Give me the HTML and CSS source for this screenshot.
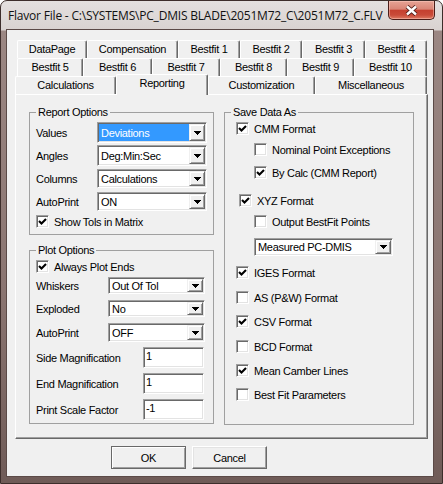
FILE: index.html
```html
<!DOCTYPE html>
<html>
<head>
<meta charset="utf-8">
<title>Flavor File</title>
<link rel="stylesheet" href="styles.css">
</head>
<body>
<div class="window">
  <div class="titlebar">
    <span class="title">Flavor File - C:\SYSTEMS\PC_DMIS BLADE\2051M72_C\2051M72_C.FLV</span>
    <div class="close">
      <svg width="13" height="11" viewBox="0 0 13 11"><path d="M2 1.5 L11 9.5 M11 1.5 L2 9.5" stroke="#4a1a14" stroke-width="4.2" fill="none"/><path d="M2 1.5 L11 9.5 M11 1.5 L2 9.5" stroke="#fff" stroke-width="2.4" fill="none"/></svg>
    </div>
  </div>
  <div class="client">
    <div class="tabctl">
      <div class="tabrow r1">
        <div class="tab">DataPage</div>
        <div class="tab">Compensation</div>
        <div class="tab">Bestfit 1</div>
        <div class="tab">Bestfit 2</div>
        <div class="tab">Bestfit 3</div>
        <div class="tab">Bestfit 4</div>
      </div>
      <div class="tabrow r2">
        <div class="tab">Bestfit 5</div>
        <div class="tab">Bestfit 6</div>
        <div class="tab">Bestfit 7</div>
        <div class="tab">Bestfit 8</div>
        <div class="tab">Bestfit 9</div>
        <div class="tab">Bestfit 10</div>
      </div>
      <div class="tabrow r3">
        <div class="tab">Calculations</div>
        <div class="tab active">Reporting</div>
        <div class="tab">Customization</div>
        <div class="tab">Miscellaneous</div>
      </div>
      <div class="panel">
        <div class="col">
          <fieldset class="group g-report">
            <legend>Report Options</legend>
            <div class="field mt3"><span class="lbl lbl-r">Values</span><div class="combo w110 h21"><span class="cval sel">Deviations</span><span class="cbtn"><svg width="7" height="4" viewBox="0 0 7 4"><path d="M0 0H7V1H6V2H5V3H4V4H3V3H2V2H1V1H0Z"/></svg></span></div></div>
            <div class="field mt2"><span class="lbl lbl-r">Angles</span><div class="combo w110 h21"><span class="cval">Deg:Min:Sec</span><span class="cbtn"><svg width="7" height="4" viewBox="0 0 7 4"><path d="M0 0H7V1H6V2H5V3H4V4H3V3H2V2H1V1H0Z"/></svg></span></div></div>
            <div class="field mt3"><span class="lbl lbl-r">Columns</span><div class="combo w110 h19"><span class="cval">Calculations</span><span class="cbtn"><svg width="7" height="4" viewBox="0 0 7 4"><path d="M0 0H7V1H6V2H5V3H4V4H3V3H2V2H1V1H0Z"/></svg></span></div></div>
            <div class="field mt4"><span class="lbl lbl-r">AutoPrint</span><div class="combo w110 h19"><span class="cval">ON</span><span class="cbtn"><svg width="7" height="4" viewBox="0 0 7 4"><path d="M0 0H7V1H6V2H5V3H4V4H3V3H2V2H1V1H0Z"/></svg></span></div></div>
            <div class="check mt4"><span class="box"><svg class="tick" width="11" height="11" viewBox="0 0 11 11"><polyline points="2,5 4.5,7.5 9,3" fill="none" stroke="#000" stroke-width="2.1"/></svg></span><span>Show Tols in Matrix</span></div>
          </fieldset>
          <fieldset class="group g-plot">
            <legend>Plot Options</legend>
            <div class="check mt3"><span class="box"><svg class="tick" width="11" height="11" viewBox="0 0 11 11"><polyline points="2,5 4.5,7.5 9,3" fill="none" stroke="#000" stroke-width="2.1"/></svg></span><span>Always Plot Ends</span></div>
            <div class="field mt4"><span class="lbl lbl-p">Whiskers</span><div class="combo w97 h17"><span class="cval">Out Of Tol</span><span class="cbtn"><svg width="7" height="4" viewBox="0 0 7 4"><path d="M0 0H7V1H6V2H5V3H4V4H3V3H2V2H1V1H0Z"/></svg></span></div></div>
            <div class="field mt6"><span class="lbl lbl-p">Exploded</span><div class="combo w97 h17"><span class="cval">No</span><span class="cbtn"><svg width="7" height="4" viewBox="0 0 7 4"><path d="M0 0H7V1H6V2H5V3H4V4H3V3H2V2H1V1H0Z"/></svg></span></div></div>
            <div class="field mt6"><span class="lbl lbl-p">AutoPrint</span><div class="combo w97 h19"><span class="cval">OFF</span><span class="cbtn"><svg width="7" height="4" viewBox="0 0 7 4"><path d="M0 0H7V1H6V2H5V3H4V4H3V3H2V2H1V1H0Z"/></svg></span></div></div>
            <div class="field mt5"><span class="lbl lbl-t">Side Magnification</span><div class="text">1</div></div>
            <div class="field mt5"><span class="lbl lbl-t">End Magnification</span><div class="text">1</div></div>
            <div class="field mt5"><span class="lbl lbl-t">Print Scale Factor</span><div class="text">-1</div></div>
          </fieldset>
        </div>
        <div class="col">
          <fieldset class="group g-save">
            <legend>Save Data As</legend>
            <div class="check mt3 ind5"><span class="box"><svg class="tick" width="11" height="11" viewBox="0 0 11 11"><polyline points="2,5 4.5,7.5 9,3" fill="none" stroke="#000" stroke-width="2.1"/></svg></span><span>CMM Format</span></div>
            <div class="check mt8 ind23"><span class="box"></span><span>Nominal Point Exceptions</span></div>
            <div class="check mt10 ind23"><span class="box"><svg class="tick" width="11" height="11" viewBox="0 0 11 11"><polyline points="2,5 4.5,7.5 9,3" fill="none" stroke="#000" stroke-width="2.1"/></svg></span><span>By Calc (CMM Report)</span></div>
            <div class="check mt15 ind8"><span class="box"><svg class="tick" width="11" height="11" viewBox="0 0 11 11"><polyline points="2,5 4.5,7.5 9,3" fill="none" stroke="#000" stroke-width="2.1"/></svg></span><span>XYZ Format</span></div>
            <div class="check mt8 ind23"><span class="box"></span><span>Output BestFit Points</span></div>
            <div class="combo w139 h18 mt10 ind23"><span class="cval">Measured PC-DMIS</span><span class="cbtn"><svg width="7" height="4" viewBox="0 0 7 4"><path d="M0 0H7V1H6V2H5V3H4V4H3V3H2V2H1V1H0Z"/></svg></span></div>
            <div class="check mt10 ind5"><span class="box"><svg class="tick" width="11" height="11" viewBox="0 0 11 11"><polyline points="2,5 4.5,7.5 9,3" fill="none" stroke="#000" stroke-width="2.1"/></svg></span><span>IGES Format</span></div>
            <div class="check mt12 ind5"><span class="box"></span><span>AS (P&amp;W) Format</span></div>
            <div class="check mt11 ind5"><span class="box"><svg class="tick" width="11" height="11" viewBox="0 0 11 11"><polyline points="2,5 4.5,7.5 9,3" fill="none" stroke="#000" stroke-width="2.1"/></svg></span><span>CSV Format</span></div>
            <div class="check mt12 ind5"><span class="box"></span><span>BCD Format</span></div>
            <div class="check mt11 ind5"><span class="box"><svg class="tick" width="11" height="11" viewBox="0 0 11 11"><polyline points="2,5 4.5,7.5 9,3" fill="none" stroke="#000" stroke-width="2.1"/></svg></span><span>Mean Camber Lines</span></div>
            <div class="check mt11 ind5"><span class="box"></span><span>Best Fit Parameters</span></div>
          </fieldset>
        </div>
      </div>
    </div>
    <div class="buttons">
      <div class="btn default">OK</div>
      <div class="btn">Cancel</div>
    </div>
  </div>
</div>
</body>
</html>
```
FILE: styles.css
```css
* { box-sizing: border-box; }
html, body { margin: 0; padding: 0; }
body {
  width: 443px;
  height: 484px;
  overflow: hidden;
  background: #ffffff;
  font-family: "Liberation Sans", Arial, sans-serif;
  font-size: 11px;
  letter-spacing: -0.3px;
  color: #000;
}

.window {
  width: 443px;
  height: 484px;
  border: 1px solid #3d2e2b;
  border-radius: 7px 7px 0 0;
  background: linear-gradient(to bottom, #e4e0df 0px, #d9d3d1 29px, #9b8783 30px, #8a7571 60%, #6f5b57 100%);
  padding: 0 8px 6px 5px;
  display: flex;
  flex-direction: column;
}

.titlebar {
  height: 28px;
  margin: 0 -8px 0 -5px;
  padding: 0 7px;
  display: flex;
  align-items: center;
  border-radius: 6px 6px 0 0;
}
.title {
  font-family: "Open Sans", "Noto Sans", sans-serif;
  font-size: 12px;
  letter-spacing: -0.2px;
  color: #111;
  white-space: nowrap;
}
.close {
  margin-left: auto;
  align-self: flex-start;
  width: 47px;
  height: 19px;
  border: 1px solid #4b1d18;
  border-top: none;
  border-radius: 0 0 5px 5px;
  background: linear-gradient(to bottom, #e6a395 0%, #d98576 45%, #c5402f 52%, #c94b39 78%, #de7a62 100%);
  box-shadow: inset 0 0 0 1px rgba(255, 210, 200, 0.45);
  display: flex;
  align-items: center;
  justify-content: center;
}
.close svg { display: block; }

.client {
  flex: 1;
  background: #f0f0f0;
  border: 1px solid #5b4a47;
  padding: 10px 0 0 8px;
  display: flex;
  flex-direction: column;
}

.tabctl { width: 413px; }
.tabrow { display: flex; height: 18px; }
.r1, .r2 { margin-left: 2px; }
.tab {
  height: 18px;
  flex: none;
  background: #f0f0f0;
  border-top: 1px solid #fff;
  border-left: 1px solid #fff;
  border-right: 1px solid #696969;
  box-shadow: inset -1px 0 0 #a0a0a0;
  border-radius: 2px 2px 0 0;
  text-align: center;
  line-height: 16px;
  white-space: nowrap;
}
.r1 .tab:nth-child(1) { width: 70px; }
.r1 .tab:nth-child(2) { width: 91px; }
.r1 .tab:nth-child(3) { width: 62px; }
.r1 .tab:nth-child(4) { width: 62px; }
.r1 .tab:nth-child(5) { width: 63px; }
.r1 .tab:nth-child(6) { width: 62px; }
.r2 .tab:nth-child(1) { width: 66px; }
.r2 .tab:nth-child(2) { width: 69px; }
.r2 .tab:nth-child(3) { width: 68px; }
.r2 .tab:nth-child(4) { width: 67px; }
.r2 .tab:nth-child(5) { width: 67px; }
.r2 .tab:nth-child(6) { width: 73px; }
.r3 .tab:nth-child(1) { width: 101px; }
.r3 .tab:nth-child(2) { width: 92px; }
.r3 .tab:nth-child(3) { width: 107px; }
.r3 .tab:nth-child(4) { width: 112px; }
.tab.active {
  height: 21px;
  margin-top: -2px;
  margin-bottom: -1px;
  position: relative;
  z-index: 1;
}

.panel {
  width: 413px;
  height: 345px;
  background: #f0f0f0;
  border: 1px solid;
  border-color: #fff #696969 #696969 #fff;
  box-shadow: inset -1px -1px 0 #a0a0a0;
  display: flex;
  align-items: flex-start;
  gap: 10px;
  padding: 0 0 0 13px;
}
.col { display: flex; flex-direction: column; }

.group {
  margin: 0;
  min-width: 0;
  border: 1px solid #a0a0a0;
  padding: 0 6px 6px 6px;
  display: block;
}
.group legend {
  padding: 0 2px;
  line-height: 14px;
}
.g-report { width: 185px; margin-top: 10px; }
.g-plot { width: 185px; margin-top: 8px; padding-bottom: 3px; }
.g-save { width: 190px; margin-top: 10px; padding-bottom: 23px; }

.field { display: flex; align-items: center; }
.lbl { flex: none; white-space: nowrap; }
.lbl-r { width: 61px; }
.lbl-p { width: 72px; }
.lbl-t { width: 107px; }

.combo {
  display: flex;
  flex: none;
  background: #fff;
  border: 1px solid;
  border-color: #a0a0a0 #fff #fff #a0a0a0;
  box-shadow: inset 1px 1px 0 #696969, inset -1px -1px 0 #e3e3e3;
  padding: 1px;
}
.w110 { width: 110px; }
.w97 { width: 97px; }
.w139 { width: 139px; }
.h21 { height: 21px; }
.h19 { height: 19px; }
.h18 { height: 18px; }
.h17 { height: 17px; }
.cval {
  flex: 1;
  display: flex;
  align-items: center;
  padding-left: 2px;
  white-space: nowrap;
  overflow: hidden;
}
.cval.sel { background: #3399ff; color: #fff; }
.cbtn {
  width: 16px;
  flex: none;
  background: #f0f0f0;
  border: 1px solid;
  border-color: #f0f0f0 #696969 #696969 #f0f0f0;
  box-shadow: inset 1px 1px 0 #fff, inset -1px -1px 0 #a0a0a0;
  display: flex;
  align-items: center;
  justify-content: center;
}
.cbtn svg { display: block; }

.text {
  width: 61px;
  height: 21px;
  flex: none;
  background: #fff;
  border: 1px solid;
  border-color: #a0a0a0 #fff #fff #a0a0a0;
  box-shadow: inset 1px 1px 0 #696969, inset -1px -1px 0 #e3e3e3;
  padding: 1px 2px 0 2px;
  line-height: 14px;
}

.check { display: flex; align-items: center; height: 13px; gap: 5px; white-space: nowrap; }
.box {
  width: 13px;
  height: 13px;
  flex: none;
  background: #fff;
  border: 1px solid;
  border-color: #a0a0a0 #fff #fff #a0a0a0;
  box-shadow: inset 1px 1px 0 #696969, inset -1px -1px 0 #e3e3e3;
}
.tick { display: block; }

.ind5 { margin-left: 5px; }
.ind8 { margin-left: 8px; }
.ind23 { margin-left: 23px; }

.mt2 { margin-top: 2px; }
.mt3 { margin-top: 3px; }
.mt4 { margin-top: 4px; }
.mt5 { margin-top: 5px; }
.mt6 { margin-top: 6px; }
.mt8 { margin-top: 8px; }
.mt10 { margin-top: 10px; }
.mt11 { margin-top: 11px; }
.mt12 { margin-top: 12px; }
.mt15 { margin-top: 15px; }

.buttons {
  display: flex;
  gap: 6px;
  margin: 7px 0 0 96px;
}
.btn {
  width: 75px;
  height: 23px;
  display: flex;
  align-items: center;
  justify-content: center;
  background: #f0f0f0;
  border: 1px solid;
  border-color: #fff #696969 #696969 #fff;
  box-shadow: inset -1px -1px 0 #a0a0a0, inset 1px 1px 0 #e3e3e3;
}
.btn.default {
  border-color: #696969;
  box-shadow: inset 1px 1px 0 #fff, inset -1px -1px 0 #a0a0a0;
}
```
